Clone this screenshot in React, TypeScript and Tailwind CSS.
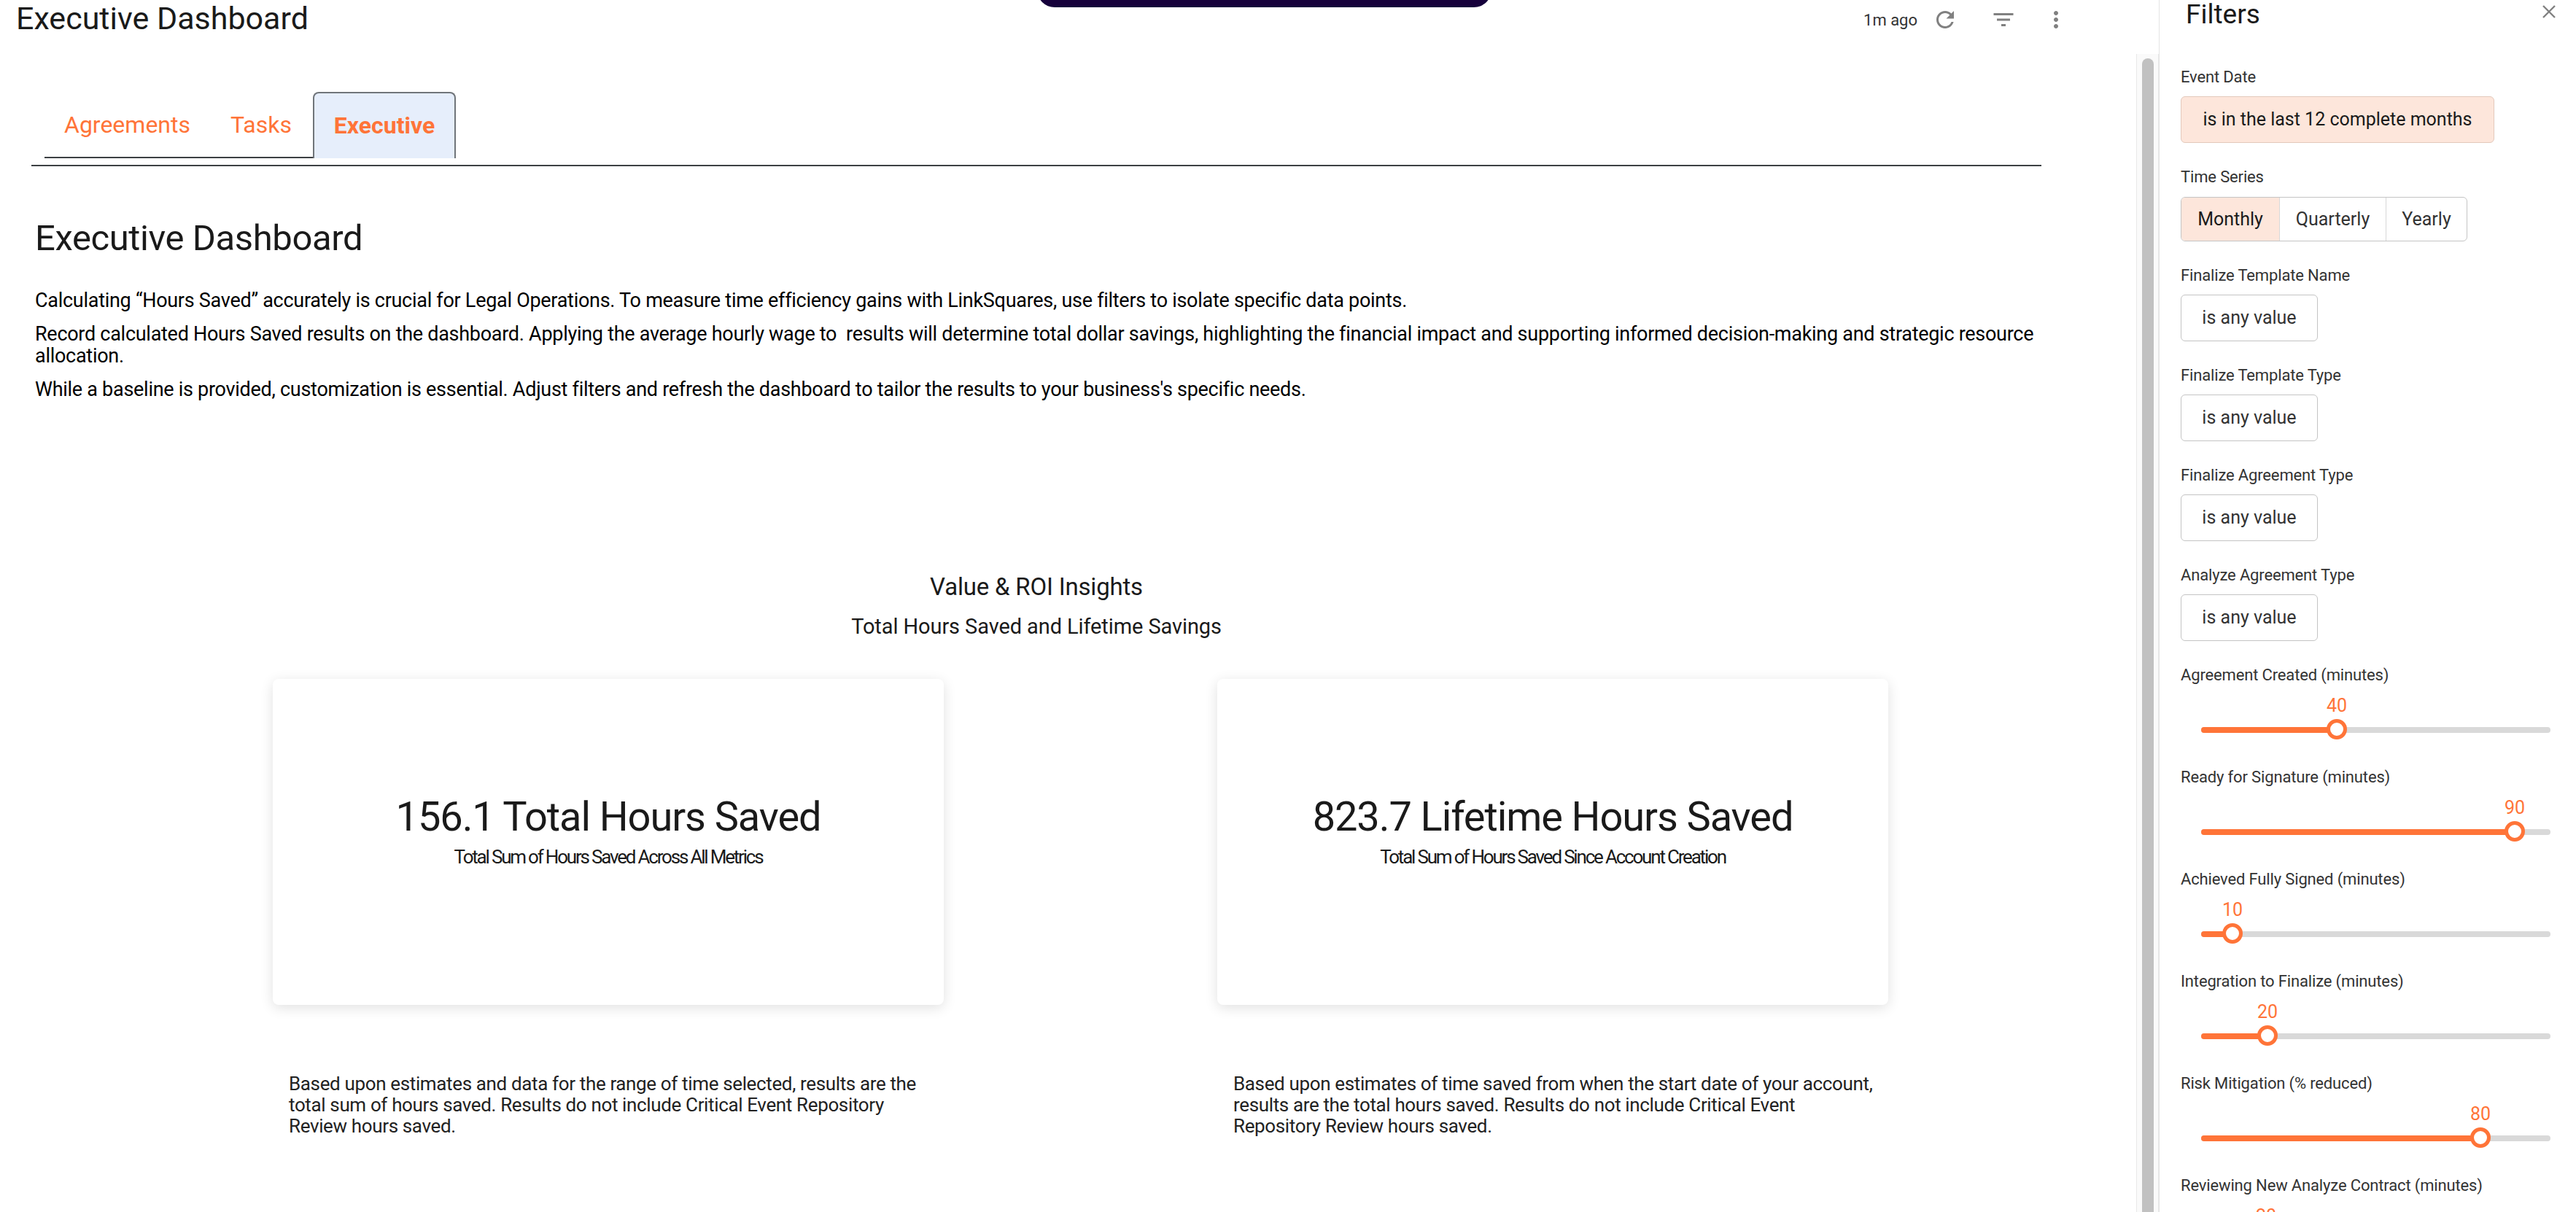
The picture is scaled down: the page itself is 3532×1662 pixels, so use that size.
const sansStack = "font-['Roboto','Liberation_Sans',sans-serif]";

const orange = 'text-[#ff7438]';

function RefreshIcon() {
    return (
        <svg viewBox="0 0 24 24" className="w-[36px] h-[36px] fill-[#808080]">
            <path d="M17.65 6.35C16.2 4.9 14.21 4 12 4c-4.42 0-7.99 3.58-7.99 8s3.57 8 7.99 8c3.73 0 6.84-2.55 7.73-6h-2.08c-.82 2.33-3.04 4-5.65 4-3.31 0-6-2.69-6-6s2.69-6 6-6c1.66 0 3.14.69 4.22 1.78L13 11h7V4l-2.35 2.35z" />
        </svg>
    );
}

function FilterIcon() {
    return (
        <svg viewBox="0 0 24 24" className="w-[36px] h-[36px] fill-[#808080]">
            <path d="M10 18h4v-2h-4v2zM3 6v2h18V6H3zm3 7h12v-2H6v2z" />
        </svg>
    );
}

function MoreIcon() {
    return (
        <svg viewBox="0 0 24 24" className="w-[36px] h-[36px] fill-[#808080]">
            <path d="M12 8c1.1 0 2-.9 2-2s-.9-2-2-2-2 .9-2 2 .9 2 2 2zm0 2c-1.1 0-2 .9-2 2s.9 2 2 2 2-.9 2-2-.9-2-2-2zm0 6c-1.1 0-2 .9-2 2s.9 2 2 2 2-.9 2-2-.9-2-2-2z" />
        </svg>
    );
}

function CloseIcon() {
    return (
        <svg viewBox="0 0 18 18" className="w-[18px] h-[18px] stroke-[#808080]" fill="none" strokeWidth="2.4">
            <path d="M1 1l16 16M17 1L1 17" />
        </svg>
    );
}

function FieldLabel({ text }: { text: string }) {
    return <div className="h-[30px] leading-[30px] text-[22px] tracking-[-0.15px] text-[#333333] whitespace-nowrap">{text}</div>;
}

function AnyValueFilter({ label }: { label: string }) {
    return (
        <div className="mb-[32px]">
            <FieldLabel text={label} />
            <div className="mt-[11px] w-[188px] h-[64px] flex items-center justify-center rounded-[6px] border border-[#c4c4c4] bg-white text-[25px] text-[#333333]">
                is any value
            </div>
        </div>
    );
}

// pos is the handle centre in px from the start of the track
function SliderFilter({ label, value, pos }: { label: string; value: number; pos: number }) {
    return (
        <div className="mb-[32px]">
            <FieldLabel text={label} />
            <div className="relative mt-[12px] ml-[28px] w-[479px] h-[66px]">
                <div className="absolute left-0 right-0 top-[44px] h-[8px] rounded-full bg-[#d9d9d9]" />
                <div className="absolute left-0 top-[44px] h-[8px] rounded-l-full bg-[#ff7438]" style={{ width: pos }} />
                <div className="absolute top-0 w-0 flex flex-col items-center" style={{ left: pos }}>
                    <span className={`h-[30px] leading-[30px] text-[25px] ${orange}`}>{value}</span>
                    <span className="shrink-0 mt-[3px] w-[28px] h-[28px] rounded-full border-[5px] border-[#ff7438] bg-white" />
                </div>
            </div>
        </div>
    );
}

function MetricCard({ title, subtitle, note }: { title: string; subtitle: string; note: string }) {
    return (
        <div className="w-[920px]">
            <div className="h-[447px] pb-[28px] flex flex-col items-center justify-center rounded-[8px] bg-white shadow-[0_4px_18px_rgba(0,0,0,0.12)]">
                <div className="h-[70px] leading-[70px] text-[56px] text-[#1a1a1a] tracking-[-1.1px]">{title}</div>
                <div className="h-[41px] leading-[41px] text-[26px] text-[#1a1a1a] tracking-[-2.2px]">{subtitle}</div>
            </div>
            <p className="mt-[94px] pl-[22px] pr-[12px] text-[26px] tracking-[-0.36px] leading-[29px] text-[#222222]">{note}</p>
        </div>
    );
}

export default function App() {
    return (
        <div className={`relative flex w-[3532px] h-[1662px] overflow-hidden bg-white ${sansStack}`}>
            {/* Notch at the top of the page, its top edge runs off screen */}
            <div className="absolute left-[1422px] -top-[14px] w-[623px] h-[24px] rounded-b-[24px] bg-[#16003b]" />

            <div className="w-[2961px] h-full flex flex-col border-r border-[#e4e4e4]">
                {/* Header */}
                <div className="h-[74px] shrink-0 flex items-start justify-between">
                    <h1 className="pl-[22px] leading-[50px] text-[43px] text-[#1a1a1a]">Executive Dashboard</h1>
                    <div className="flex items-center h-[54px] pr-[123px]">
                        <span className="text-[22px] text-[#333333] mr-[20px]">1m ago</span>
                        <RefreshIcon />
                        <span className="w-[44px]" />
                        <FilterIcon />
                        <span className="w-[36px]" />
                        <MoreIcon />
                    </div>
                </div>

                <div className="flex-1 min-h-0 flex">
                    {/* Content */}
                    <div className="w-[2929px] pl-[43px] pt-[52px]">
                        <div className="w-[2756px]">
                            <div className="pb-[9px] border-b-2 border-[#3c4043]">
                                <div className="ml-[18px] h-[91px] flex">
                                    <div className="flex border-b-2 border-[#3c4043] text-[32px] text-[#ff7438]">
                                        <div className="w-[228px] pl-[27px] flex items-center">Agreements</div>
                                        <div className="w-[140px] pl-[27px] flex items-center">Tasks</div>
                                    </div>
                                    <div className={`w-[196px] pb-[2px] flex items-center justify-center rounded-t-[8px] border-2 border-b-0 border-[#70757a] bg-[#e6eefb] text-[32px] font-bold ${orange}`}>
                                        Executive
                                    </div>
                                </div>
                            </div>

                            <div className="px-[5px]">
                                <h2 className="mt-[69px] leading-[60px] text-[49px] tracking-[-0.4px] text-[#1a1a1a]">Executive Dashboard</h2>
                                <div className="mt-[40px] text-[27px] tracking-[-0.28px] leading-[30px] text-black">
                                    <p>Calculating “Hours Saved” accurately is crucial for Legal Operations. To measure time efficiency gains with LinkSquares, use filters to isolate specific data points.</p>
                                    <p className="mt-[16px]">Record calculated Hours Saved results on the dashboard. Applying the average hourly wage to&nbsp; results will determine total dollar savings, highlighting the financial impact and supporting informed decision-making and strategic resource allocation.</p>
                                    <p className="mt-[16px]">While a baseline is provided, customization is essential. Adjust filters and refresh the dashboard to tailor the results to your business's specific needs.</p>
                                </div>
                            </div>

                            <div className="mt-[236px] text-center text-[#1a1a1a]">
                                <div className="leading-[40px] text-[33px] tracking-[-0.2px]">Value &amp; ROI Insights</div>
                                <div className="mt-[16px] leading-[36px] text-[29px] tracking-[-0.1px]">Total Hours Saved and Lifetime Savings</div>
                            </div>

                            <div className="mt-[54px] ml-[331px] flex gap-[375px]">
                                <MetricCard
                                    title="156.1 Total Hours Saved"
                                    subtitle="Total Sum of Hours Saved Across All Metrics"
                                    note="Based upon estimates and data for the range of time selected, results are the total sum of hours saved. Results do not include Critical Event Repository Review hours saved."
                                />
                                <MetricCard
                                    title="823.7 Lifetime Hours Saved"
                                    subtitle="Total Sum of Hours Saved Since Account Creation"
                                    note="Based upon estimates of time saved from when the start date of your account, results are the total hours saved. Results do not include Critical Event Repository Review hours saved."
                                />
                            </div>
                        </div>
                    </div>

                    {/* Scrollbar */}
                    <div className="w-[31px] pt-[6px] flex justify-center bg-[#fafafa] border-x border-[#e8e8e8]">
                        <div className="w-[16px] h-full rounded-t-full bg-[#c1c1c1]" />
                    </div>
                </div>
            </div>

            {/* Filters panel */}
            <div className="flex-1 pl-[29px] overflow-hidden">
                <div className="h-[40px] flex items-start justify-between pr-[28px]">
                    <h2 className="ml-[7px] leading-[40px] text-[37px] text-[#1a1a1a]">Filters</h2>
                    <div className="pt-[7px]"><CloseIcon /></div>
                </div>

                <div className="mt-[51px] mb-[32px]">
                    <FieldLabel text="Event Date" />
                    <div className="mt-[11px] w-[430px] h-[64px] flex items-center justify-center rounded-[6px] border border-[#e3c9bc] bg-[#fde6db] text-[25px] text-[#1a1a1a]">
                        is in the last 12 complete months
                    </div>
                </div>

                <div className="mb-[32px]">
                    <FieldLabel text="Time Series" />
                    <div className="mt-[12px] w-[393px] h-[61px] flex rounded-[6px] border border-[#c4c4c4] overflow-hidden text-[25px] text-[#333333]">
                        <div className="w-[135px] flex items-center justify-center bg-[#fde6db] text-[#1a1a1a] border-r border-[#d8d8d8]">Monthly</div>
                        <div className="w-[146px] flex items-center justify-center border-r border-[#d8d8d8]">Quarterly</div>
                        <div className="flex-1 flex items-center justify-center">Yearly</div>
                    </div>
                </div>

                <AnyValueFilter label="Finalize Template Name" />
                <AnyValueFilter label="Finalize Template Type" />
                <AnyValueFilter label="Finalize Agreement Type" />
                <AnyValueFilter label="Analyze Agreement Type" />

                <SliderFilter label="Agreement Created (minutes)" value={40} pos={186} />
                <SliderFilter label="Ready for Signature (minutes)" value={90} pos={430} />
                <SliderFilter label="Achieved Fully Signed (minutes)" value={10} pos={43} />
                <SliderFilter label="Integration to Finalize (minutes)" value={20} pos={91} />
                <SliderFilter label="Risk Mitigation (% reduced)" value={80} pos={383} />
                <SliderFilter label="Reviewing New Analyze Contract (minutes)" value={20} pos={89} />
            </div>
        </div>
    );
}
